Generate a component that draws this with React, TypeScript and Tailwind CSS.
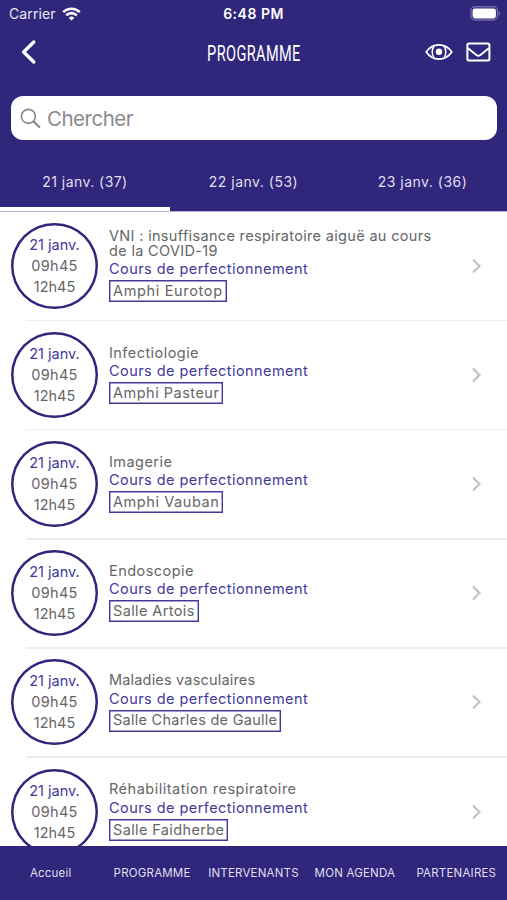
import clsx from 'clsx';

interface Session {
  id: number;
  title: string;
  titleClass: string;
  room: string;
  roomClass: string;
}

const tabs = [
  { label: '21 janv. (37)', className: 'tracking-[0.45px]', active: true },
  { label: '22 janv. (53)', className: 'tracking-[0.5px]', active: false },
  { label: '23 janv. (36)', className: 'tracking-[0.5px]', active: false },
];

const sessions: Session[] = [
  { id: 1, title: 'VNI : insuffisance respiratoire aiguë au cours de la COVID-19', titleClass: 'tracking-[0.33px]', room: 'Amphi Eurotop', roomClass: 'tracking-[0.66px]' },
  { id: 2, title: 'Infectiologie', titleClass: 'tracking-[0.45px]', room: 'Amphi Pasteur', roomClass: 'tracking-[0.5px]' },
  { id: 3, title: 'Imagerie', titleClass: 'tracking-[0.45px]', room: 'Amphi Vauban', roomClass: 'tracking-[0.58px]' },
  { id: 4, title: 'Endoscopie', titleClass: 'tracking-[0.45px]', room: 'Salle Artois', roomClass: 'tracking-[0.38px]' },
  { id: 5, title: 'Maladies vasculaires', titleClass: 'tracking-[0.18px]', room: 'Salle Charles de Gaulle', roomClass: 'tracking-[0.27px]' },
  { id: 6, title: 'Réhabilitation respiratoire', titleClass: 'tracking-[0.5px]', room: 'Salle Faidherbe', roomClass: 'tracking-[0.37px]' },
];

const navItems = ['Accueil', 'PROGRAMME', 'INTERVENANTS', 'MON AGENDA', 'PARTENAIRES'];

function StatusBar() {
  return (
    <div className="grid h-[27px] grid-cols-3 items-center pl-[9px] pr-[6px] text-[14px] text-white">
      <div className="flex items-center gap-[6px]">
        <span className="tracking-[0.1px] text-white/90">Carrier</span>
        <svg width="19" height="14" viewBox="0 0 19 14" fill="none" stroke="currentColor" strokeWidth="2.6">
          <path d="M1.2 5.1a11.8 11.8 0 0 1 16.6 0" />
          <path d="M4.2 8.3a7.5 7.5 0 0 1 10.6 0" />
          <path d="M9.5 13.6 6.8 10.9a3.9 3.9 0 0 1 5.4 0Z" fill="currentColor" stroke="none" />
        </svg>
      </div>
      <span className="-ml-[3px] text-center font-semibold tracking-[0.5px]">6:48 PM</span>
      <svg className="justify-self-end" width="31" height="15" viewBox="0 0 31 15" fill="none">
        <rect x="1" y="0.8" width="26.5" height="13.2" rx="4" stroke="#6f67a8" strokeWidth="1.4" />
        <rect x="2.6" y="2.4" width="23.3" height="10" rx="2.4" fill="#fff" />
        <path d="M28.8 5.2c1.9.8 1.9 3.8 0 4.6Z" fill="#6f67a8" />
      </svg>
    </div>
  );
}

function TitleBar() {
  return (
    <div className="grid h-[50px] grid-cols-3 items-center pl-[21px] pr-4 text-white">
      <svg width="16" height="26" viewBox="0 0 16 26" fill="none" stroke="currentColor" strokeWidth="3.4" strokeLinecap="round" strokeLinejoin="round">
        <path d="M12.8 3 2.6 13 12.8 23" />
      </svg>
      <h1 className="-ml-[5px] mt-[3px] origin-center scale-x-[0.66] justify-self-center whitespace-nowrap font-[Roboto] text-[22px] font-normal leading-none tracking-[0.6px]">
        PROGRAMME
      </h1>
      <div className="flex items-center gap-[13px] justify-self-end">
        <svg width="28" height="18" viewBox="0 0 28 18" fill="none" stroke="currentColor" strokeWidth="1.8" strokeLinejoin="round">
          <path d="M1.2 9C4.4 4.4 8.8 1.9 14 1.9S23.6 4.4 26.8 9C23.6 13.6 19.2 16.1 14 16.1S4.4 13.6 1.2 9Z" />
          <path d="M9 3.2C6.6 6.4 6.6 11.6 9 14.8M19 3.2C21.4 6.4 21.4 11.6 19 14.8" strokeWidth="1.5" />
          <circle cx="14" cy="8.7" r="3.2" fill="currentColor" stroke="none" />
        </svg>
        <svg width="25" height="20" viewBox="0 0 25 20" fill="none" stroke="currentColor" strokeWidth="2" strokeLinejoin="round">
          <rect x="1.4" y="1.6" width="22" height="16.8" rx="1.5" />
          <path d="M2 6.2 10.4 13c1.5 1.1 2.500 1.100 4 0L22.800 6.200" />
        </svg>
      </div>
    </div>
  );
}

function SearchField() {
  return (
    <div className="ml-[11px] mr-[10px] mt-[19px] flex h-11 items-center rounded-[12px] bg-white pl-[9px]">
      <svg width="21" height="21" viewBox="0 0 21 21" fill="none" stroke="#8b8b8e" strokeWidth="1.7" strokeLinecap="round">
        <circle cx="8.4" cy="8.3" r="7" />
        <path d="m13.5 13.4 5.8 5.6" strokeWidth="2.2" />
      </svg>
      <span className="ml-[6px] mt-[2px] text-[20.5px] leading-none tracking-[-0.5px] text-[#8b8b8e]">Chercher</span>
    </div>
  );
}

function SessionRow({ session }: { session: Session }) {
  return (
    <li className="relative flex h-[109.2px] shrink-0 items-center pl-[11px]">
      <div className="flex h-[86px] w-[87px] shrink-0 flex-col items-center justify-center rounded-full pb-px text-[14.5px] leading-[21px] text-[#666] shadow-[inset_0_0_0_2.5px_#30267b]">
        <span className="text-[#43389a]">21 janv.</span>
        <span className="tracking-[0.3px]">09h45</span>
        <span>12h45</span>
      </div>
      <div className="ml-[11px] mr-[17px] flex w-[345px] flex-col items-start pr-4 text-[14.5px] leading-[14.5px] text-[#666]">
        <p className={session.titleClass}>{session.title}</p>
        <p className="mt-1 tracking-[0.44px] text-[#43389a]">Cours de perfectionnement</p>
        <span
          className={clsx(
            'mt-[3.5px] flex h-[22px] items-center whitespace-nowrap px-1 shadow-[inset_0_0_0_1.4px_#43389a]',
            session.roomClass
          )}
        >
          {session.room}
        </span>
      </div>
      <svg width="12" height="16" viewBox="0 0 12 16" fill="none" stroke="#c3c3c6" strokeWidth="2.2">
        <path d="m2 1.5 6.5 6.5L2 14.5" />
      </svg>
      <div className="absolute -bottom-px left-[26px] right-0 h-[1.5px] bg-[#ededee]" />
    </li>
  );
}

export default function App() {
  return (
    <div className="flex h-[900px] w-[507px] flex-col overflow-hidden bg-white font-[Inter,sans-serif]">
      <header className="flex h-[211px] shrink-0 flex-col bg-[#30267b]">
        <StatusBar />
        <TitleBar />
        <SearchField />
        <nav className="mt-auto grid h-[71px] grid-cols-3 text-[14px] text-[#e0def0]">
          {tabs.map((tab) => (
            <div
              key={tab.label}
              className={clsx(
                'flex items-center justify-center border-b-4 pb-[5px] pt-5',
                tab.className,
                tab.active ? '-mr-px border-white' : 'border-transparent'
              )}
            >
              {tab.label}
            </div>
          ))}
        </nav>
      </header>
      <ul className="flex min-h-0 flex-1 flex-col overflow-hidden shadow-[inset_0_1px_0_#b9b5d6]">
        {sessions.map((session) => (
          <SessionRow key={session.id} session={session} />
        ))}
      </ul>
      <footer className="grid h-[54px] shrink-0 grid-cols-5 items-center bg-[#30267b] pt-[2px] text-center text-[11.5px] tracking-[0.2px] text-[#e0def0]">
        {navItems.map((item) => (
          <span key={item} className="whitespace-nowrap">
            {item}
          </span>
        ))}
      </footer>
    </div>
  );
}
